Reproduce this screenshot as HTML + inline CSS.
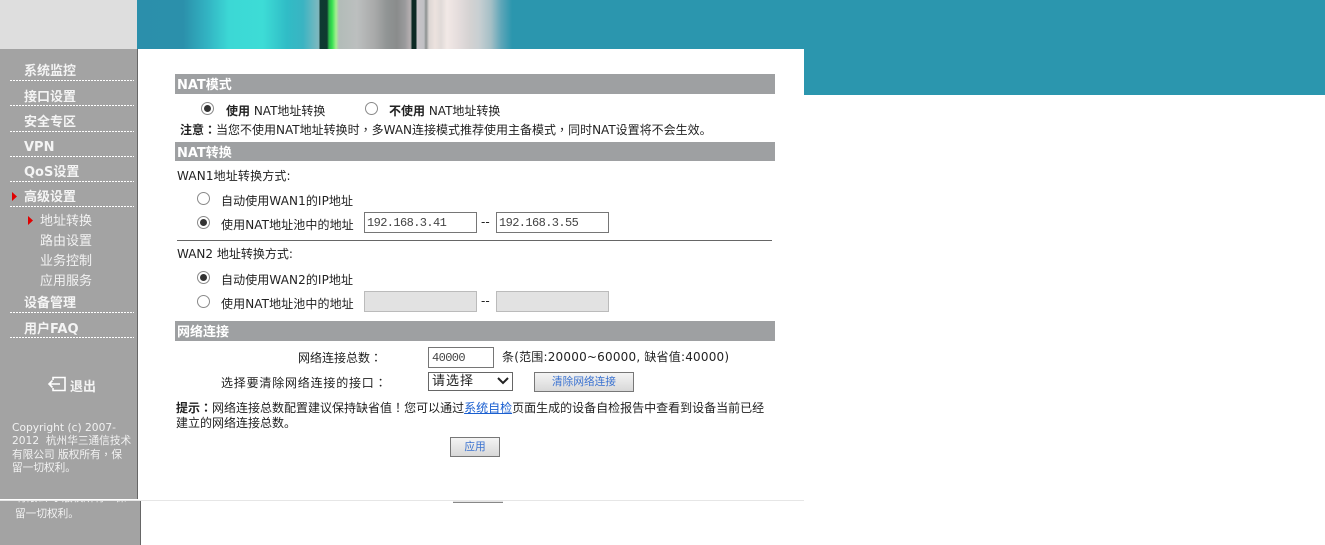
<!DOCTYPE html>
<html>
<head>
<meta charset="utf-8">
<title>NAT</title>
<style>
html,body{margin:0;padding:0;background:#fff;}
body{width:1325px;height:545px;overflow:hidden;position:relative;font-family:"DejaVu Sans","Noto Sans CJK SC",sans-serif;font-size:12px;color:#222;}
.a{position:absolute;white-space:nowrap;line-height:16px;}
.p{font-family:"Noto Sans CJK TC",sans-serif;}
.box{position:absolute;box-sizing:border-box;}
.m{position:absolute;left:24px;font-size:13px;font-weight:bold;color:#f4f4f4;line-height:16px;white-space:nowrap;}
.d{position:absolute;left:10px;width:124px;height:1px;background:repeating-linear-gradient(90deg,#fff 0,#fff 2px,transparent 2px,transparent 3px);}
.s{position:absolute;left:40px;font-size:13px;color:#f2f2f2;line-height:16px;white-space:nowrap;}
.h{position:absolute;left:175px;width:600px;background:#9ea0a2;color:#fff;font-weight:bold;font-size:13px;padding-left:2px;box-sizing:border-box;white-space:nowrap;overflow:hidden;}
.r{position:absolute;width:13px;height:13px;box-sizing:border-box;border:1px solid #8a8a8a;border-radius:50%;background:#fff;}
.r.on:after{content:"";position:absolute;left:2px;top:2px;width:7px;height:7px;border-radius:50%;background:#333;}
.i{position:absolute;box-sizing:border-box;border:1px solid #767676;background:#fff;height:21px;font-family:"Liberation Mono","Noto Sans CJK SC",monospace;font-size:12px;letter-spacing:-.6px;line-height:20px;padding-left:2px;color:#444;}
.i.dis{background:#e2e2e2;border-color:#bbb;}
.b{position:absolute;box-sizing:border-box;border:1px solid #777;background:linear-gradient(#f4f4f4,#d8d8d8);color:#3a72d0;font-size:10.67px;text-align:center;line-height:18px;height:20px;}
</style>
</head>
<body>
<!-- banner -->
<div class="box" style="left:0;top:0;width:137px;height:49px;background:#dedede;"></div>
<div class="box" style="left:137px;top:0;width:1188px;height:95px;background:#2b96ae;"></div>
<div class="box" style="left:137px;top:0;width:375px;height:49px;background:linear-gradient(90deg,#2b8fab 0,#2b90ab 46px,#33b6c4 72px,#3cd8d5 92px,#3ddcd6 126px,#30bcc6 150px,#3ab4c2 166px,#78b8c0 180px,#7fb4ba 182px,#0e3a32 183px,#0f3a30 190px,#2ab54a 192px,#35e050 195px,#a4f090 199px,#b2bcb8 202px,#bcbfbf 220px,#a8a9a9 238px,#909494 250px,#8a8c8c 260px,#9a9a9c 268px,#b5aeb0 273px,#a0a0a0 274px,#0c2a24 275px,#0c2a24 279px,#c8c4c8 280px,#c0c0c4 287px,#8a8f8f 289px,#dcd6d4 292px,#ece2de 298px,#e0dad8 304px,#f2e9e6 310px,#e4dcdc 322px,#d4d2d2 333px,#c8cfd2 342px,#a4bfc6 354px,#5fa6b8 364px,#2b96ae 375px);"></div>
<!-- main white -->
<div class="box" style="left:138px;top:49px;width:666px;height:450px;background:#fff;"></div>
<!-- sidebar -->
<div class="box" style="left:0;top:49px;width:138px;height:450px;background:#a3a3a3;border-right:1px solid #666;"></div>
<div class="box" style="left:0;top:501px;width:141px;height:44px;background:#a3a3a3;border-right:1px solid #666;"></div>
<div class="box" style="left:0;top:499px;width:804px;height:2px;background:#fff;border-bottom:1px solid #e6e6e6;"></div>
<div class="box" style="left:453px;top:501px;width:50px;height:2px;background:#e4e4e4;border-bottom:1px solid #888;"></div>
<div class="box" style="left:16px;top:501px;width:120px;height:3px;overflow:hidden;"><div class="a" style="left:0;top:-10px;font-size:10.67px;line-height:13px;color:#f2f2f2;">有限公司 版权所有<span class="p">，</span>保</div></div>
<div class="a" style="left:15px;top:507px;font-size:10.67px;line-height:14px;color:#f2f2f2;">留一切权利。</div>

<div class="m" style="top:64px;">系统监控</div><div class="d" style="top:80px;"></div>
<div class="m" style="top:90px;">接口设置</div><div class="d" style="top:105px;"></div>
<div class="m" style="top:115px;">安全专区</div><div class="d" style="top:131px;"></div>
<div class="m" style="top:140px;">VPN</div><div class="d" style="top:156px;"></div>
<div class="m" style="top:165px;">QoS设置</div><div class="d" style="top:181px;"></div>
<div class="m" style="top:190px;">高级设置</div><div class="d" style="top:206px;"></div>
<svg class="box" style="left:12px;top:192px;" width="6" height="9"><path d="M0 0L5 4.5L0 9Z" fill="#e00000"/></svg>
<svg class="box" style="left:28px;top:216px;" width="6" height="9"><path d="M0 0L5 4.5L0 9Z" fill="#e00000"/></svg>
<div class="s" style="top:214px;">地址转换</div>
<div class="s" style="top:234px;">路由设置</div>
<div class="s" style="top:254px;">业务控制</div>
<div class="s" style="top:274px;">应用服务</div>
<div class="m" style="top:296px;">设备管理</div><div class="d" style="top:312px;"></div>
<div class="m" style="top:322px;">用户FAQ</div><div class="d" style="top:337px;"></div>
<svg class="box" style="left:47px;top:376px;" width="20" height="16" fill="none" stroke="#fff" stroke-width="1.6"><path d="M6 4V1.5H18V14.5H6V12"/><path d="M13 8H2M5.5 4.5L2 8L5.5 11.5"/></svg>
<div class="a" style="left:70px;top:380px;font-size:13px;font-weight:bold;color:#f4f4f4;">退出</div>
<div class="a" style="left:12px;top:421px;font-size:10.67px;line-height:13.33px;color:#f2f2f2;">Copyright (c) 2007-<br>2012&nbsp; 杭州华三通信技术<br>有限公司 版权所有<span class="p">，</span>保<br>留一切权利。</div>

<!-- section bars -->
<div class="h" style="top:74px;height:20px;line-height:24px;">NAT模式</div>
<div class="h" style="top:142px;height:19px;line-height:23px;">NAT转换</div>
<div class="h" style="top:321px;height:20px;line-height:24px;">网络连接</div>

<!-- NAT mode -->
<div class="r on" style="left:201px;top:102px;"></div>
<div class="a" style="left:226px;top:103px;"><b>使用</b> NAT地址转换</div>
<div class="r" style="left:365px;top:102px;"></div>
<div class="a" style="left:389px;top:103px;"><b>不使用</b> NAT地址转换</div>
<div class="a" style="left:180px;top:122px;"><b>注意<span class="p">：</span></b>当您不使用NAT地址转换时<span class="p">，</span>多WAN连接模式推荐使用主备模式<span class="p">，</span>同时NAT设置将不会生效。</div>

<!-- WAN1 -->
<div class="a" style="left:177px;top:168px;letter-spacing:.15px;">WAN1地址转换方式:</div>
<div class="r" style="left:197px;top:192px;"></div>
<div class="a" style="left:221px;top:193px;letter-spacing:.1px;">自动使用WAN1的IP地址</div>
<div class="r on" style="left:197px;top:216px;"></div>
<div class="a" style="left:221px;top:217px;letter-spacing:.1px;">使用NAT地址池中的地址</div>
<div class="i" style="left:364px;top:212px;width:113px;">192.168.3.41</div>
<div class="a" style="left:481px;top:214px;">--</div>
<div class="i" style="left:496px;top:212px;width:113px;">192.168.3.55</div>
<div class="box" style="left:177px;top:240px;width:595px;height:1px;background:#666;"></div>

<!-- WAN2 -->
<div class="a" style="left:177px;top:246px;">WAN2 地址转换方式:</div>
<div class="r on" style="left:197px;top:271px;"></div>
<div class="a" style="left:221px;top:272px;letter-spacing:.1px;">自动使用WAN2的IP地址</div>
<div class="r" style="left:197px;top:295px;"></div>
<div class="a" style="left:221px;top:296px;letter-spacing:.1px;">使用NAT地址池中的地址</div>
<div class="i dis" style="left:364px;top:291px;width:113px;"></div>
<div class="a" style="left:481px;top:293px;">--</div>
<div class="i dis" style="left:496px;top:291px;width:113px;"></div>

<!-- Connections -->
<div class="a" style="left:298px;top:350px;">网络连接总数<span class="p">：</span></div>
<div class="i" style="left:428px;top:347px;width:66px;padding-left:3px;">40000</div>
<div class="a" style="left:502px;top:349px;letter-spacing:.2px;">条(范围:20000~60000, 缺省值:40000)</div>
<div class="a" style="left:221px;top:375px;letter-spacing:.8px;">选择要清除网络连接的接口<span class="p">：</span></div>
<div class="box" style="left:428px;top:372px;width:85px;height:19px;border:1px solid #666;background:#fff;font-size:13px;line-height:17px;padding-left:3px;letter-spacing:1px;">请选择</div>
<svg class="box" style="left:497px;top:377px;" width="12" height="8" fill="none" stroke="#222" stroke-width="2"><path d="M1 1L6 6L11 1"/></svg>
<div class="b" style="left:534px;top:372px;width:100px;">清除网络连接</div>

<div class="a" style="left:176px;top:400px;"><b>提示<span class="p">：</span></b>网络连接总数配置建议保持缺省值<span class="p">！</span>您可以通过<span style="color:#1a5fd0;text-decoration:underline;">系统自检</span>页面生成的设备自检报告中查看到设备当前已经</div>
<div class="a" style="left:176px;top:415px;">建立的网络连接总数。</div>
<div class="b" style="left:450px;top:437px;width:50px;">应用</div>
</body>
</html>
